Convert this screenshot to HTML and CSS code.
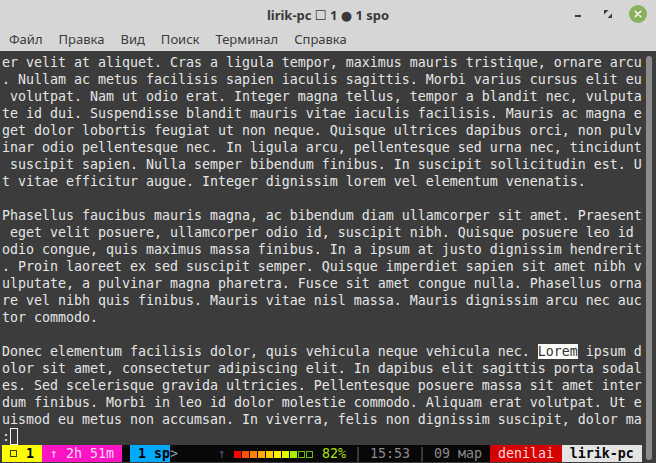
FILE: index.html
```html
<!DOCTYPE html>
<html lang="ru">
<head>
<meta charset="utf-8">
<title>lirik-pc</title>
<link rel="stylesheet" href="styles.css">
</head>
<body>
<div class="window">
  <header class="titlebar">
    <div class="title-spacer"></div>
    <div class="title">lirik-pc ☐ 1 ● 1 spo</div>
    <div class="controls">
      <span class="ctrl"><span class="min-bar"></span></span>
      <span class="ctrl">
        <svg width="8" height="8" viewBox="0 0 8 8"><polygon points="0,0 4.5,0 0,4.5" fill="#3a3a3a"/><polygon points="8,3.5 8,8 3.5,8" fill="#3a3a3a"/></svg>
      </span>
      <span class="ctrl close">
        <svg width="18" height="18" viewBox="0 0 18 18"><circle cx="9" cy="9" r="9" fill="#88b25a"/><path d="M6.2 6.2 L11.8 11.8 M11.8 6.2 L6.2 11.8" stroke="#ffffff" stroke-width="1.4" stroke-linecap="round"/></svg>
      </span>
    </div>
  </header>
  <nav class="menubar">
    <span class="menu-item">Файл</span>
    <span class="menu-item">Правка</span>
    <span class="menu-item">Вид</span>
    <span class="menu-item">Поиск</span>
    <span class="menu-item">Терминал</span>
    <span class="menu-item">Справка</span>
  </nav>
  <main class="terminal">
    <div class="screen">
      <div class="line">er velit at aliquet. Cras a ligula tempor, maximus mauris tristique, ornare arcu</div>
      <div class="line">. Nullam ac metus facilisis sapien iaculis sagittis. Morbi varius cursus elit eu</div>
      <div class="line"> volutpat. Nam ut odio erat. Integer magna tellus, tempor a blandit nec, vulputa</div>
      <div class="line">te id dui. Suspendisse blandit mauris vitae iaculis facilisis. Mauris ac magna e</div>
      <div class="line">get dolor lobortis feugiat ut non neque. Quisque ultrices dapibus orci, non pulv</div>
      <div class="line">inar odio pellentesque nec. In ligula arcu, pellentesque sed urna nec, tincidunt</div>
      <div class="line"> suscipit sapien. Nulla semper bibendum finibus. In suscipit sollicitudin est. U</div>
      <div class="line">t vitae efficitur augue. Integer dignissim lorem vel elementum venenatis.</div>
      <div class="line"></div>
      <div class="line">Phasellus faucibus mauris magna, ac bibendum diam ullamcorper sit amet. Praesent</div>
      <div class="line"> eget velit posuere, ullamcorper odio id, suscipit nibh. Quisque posuere leo id </div>
      <div class="line">odio congue, quis maximus massa finibus. In a ipsum at justo dignissim hendrerit</div>
      <div class="line">. Proin laoreet ex sed suscipit semper. Quisque imperdiet sapien sit amet nibh v</div>
      <div class="line">ulputate, a pulvinar magna pharetra. Fusce sit amet congue nulla. Phasellus orna</div>
      <div class="line">re vel nibh quis finibus. Mauris vitae nisl massa. Mauris dignissim arcu nec auc</div>
      <div class="line">tor commodo.</div>
      <div class="line"></div>
      <div class="line">Donec elementum facilisis dolor, quis vehicula neque vehicula nec. <span class="hl">Lorem</span> ipsum d</div>
      <div class="line">olor sit amet, consectetur adipiscing elit. In dapibus elit sagittis porta sodal</div>
      <div class="line">es. Sed scelerisque gravida ultricies. Pellentesque posuere massa sit amet inter</div>
      <div class="line">dum finibus. Morbi in leo id dolor molestie commodo. Aliquam erat volutpat. Ut e</div>
      <div class="line">uismod eu metus non accumsan. In viverra, felis non dignissim suscipit, dolor ma</div>
      <div class="line">:<span class="cursor"></span></div>
      <div class="status">
        <span class="seg seg-yellow"> <span class="win-ico"></span> <b>1</b> </span>
        <span class="seg seg-magenta"> ↑ 2h 51m </span>
        <span class="seg"> </span>
        <span class="seg seg-blue"><b> 1 sp</b></span>
        <span class="seg seg-dark"><span class="arrow">&gt;</span>     <span class="up">↑</span> <span class="sq c1"></span><span class="sq c2"></span><span class="sq c3"></span><span class="sq c4"></span><span class="sq c5"></span><span class="sq c6"></span><span class="sq c7"></span><span class="sq c8"></span><span class="sq empty"></span><span class="sq empty"></span> <span class="pct">82%</span> <span class="sep">|</span> <span class="dim">15:53</span> <span class="sep">|</span> <span class="dim">09 мар</span> </span>
        <span class="seg seg-red"> denilai </span>
        <span class="seg seg-light"><b> lirik-pc </b></span>
      </div>
    </div>
    <div class="scrollbar"><div class="thumb"></div></div>
  </main>
</div>
</body>
</html>
```

FILE: styles.css
```css
* { box-sizing: border-box; }

html, body {
  margin: 0;
  padding: 0;
  width: 656px;
  height: 463px;
  overflow: hidden;
  background: #d6d6d6;
}

.window {
  width: 656px;
  height: 463px;
  display: flex;
  flex-direction: column;
  background: #d6d6d6;
}

.titlebar {
  height: 28px;
  display: grid;
  grid-template-columns: 1fr auto 1fr;
  align-items: center;
  font-family: "Noto Sans", "DejaVu Sans", sans-serif;
}

.title {
  font-size: 13px;
  font-weight: bold;
  color: #3a3a3a;
  white-space: pre;
  padding-top: 1px;
}

.controls {
  display: flex;
  justify-content: flex-end;
  align-items: center;
  gap: 12px;
  padding-right: 9px;
}

.ctrl {
  width: 18px;
  height: 18px;
  display: flex;
  align-items: center;
  justify-content: center;
}

.ctrl svg { display: block; }

.min-bar {
  display: block;
  width: 6px;
  height: 2px;
  background: #3a3a3a;
  margin-top: 4px;
}

.menubar {
  height: 23px;
  display: flex;
  align-items: center;
  gap: 16px;
  padding-left: 9px;
  padding-bottom: 1px;
  font-family: "Noto Sans", "DejaVu Sans", sans-serif;
  font-size: 13px;
  color: #3b3b3b;
}

.terminal {
  flex: 1;
  display: flex;
  background: #3c3c3c;
  overflow: hidden;
}

.screen {
  width: 643px;
  padding: 3px 0 0 2px;
  font-family: "DejaVu Sans Mono", monospace;
  font-size: 13.29px;
  line-height: 17px;
  color: #e6e6e6;
}

.line {
  height: 17px;
  white-space: pre;
}

.hl {
  background: #ffffff;
  color: #333333;
}

.cursor {
  display: inline-block;
  width: 8px;
  height: 17px;
  border: 1px solid #f2f2f2;
  vertical-align: top;
}

.status {
  display: flex;
  height: 17px;
  width: 640px;
  background: #080808;
  white-space: pre;
}

.seg {
  display: block;
  height: 17px;
  white-space: pre;
}

.seg b { font-weight: bold; }

.seg-yellow { background: #ffff00; color: #000000; }
.seg-magenta { background: #ff14c4; color: #ffd7f5; }
.seg-blue { background: #00aaff; color: #000000; }
.seg-dark { background: #080808; color: #8a8a8a; }
.seg-red { background: #d70000; color: #ffd7d7; }
.seg-light { background: #e4e4e4; color: #080808; }

.win-ico {
  display: inline-block;
  width: 7px;
  height: 7px;
  border: 1px solid #3a3a10;
  margin-right: 1px;
  margin-bottom: 1px;
  vertical-align: baseline;
}

.arrow { color: #9a9a9a; }
.up { color: #4a5a78; }

.sq {
  display: inline-block;
  width: 7px;
  height: 7px;
  margin-right: 1px;
  vertical-align: baseline;
}

.c1 { background: #ff0000; }
.c2 { background: #ff5000; }
.c3 { background: #ff8200; }
.c4 { background: #ffaa00; }
.c5 { background: #ffcc00; }
.c6 { background: #ffee00; }
.c7 { background: #ddff00; }
.c8 { background: #aaee00; }
.empty { border: 1px solid #6cb800; background: transparent; }

.pct { color: #a8e000; }
.sep { color: #5f5f5f; }
.dim { color: #8a8a8a; }

.scrollbar {
  width: 13px;
  padding: 5px 4px 3px 3px;
}

.thumb {
  width: 6px;
  height: 100%;
  background: #8c8c8c;
  border-radius: 3px;
}
```
